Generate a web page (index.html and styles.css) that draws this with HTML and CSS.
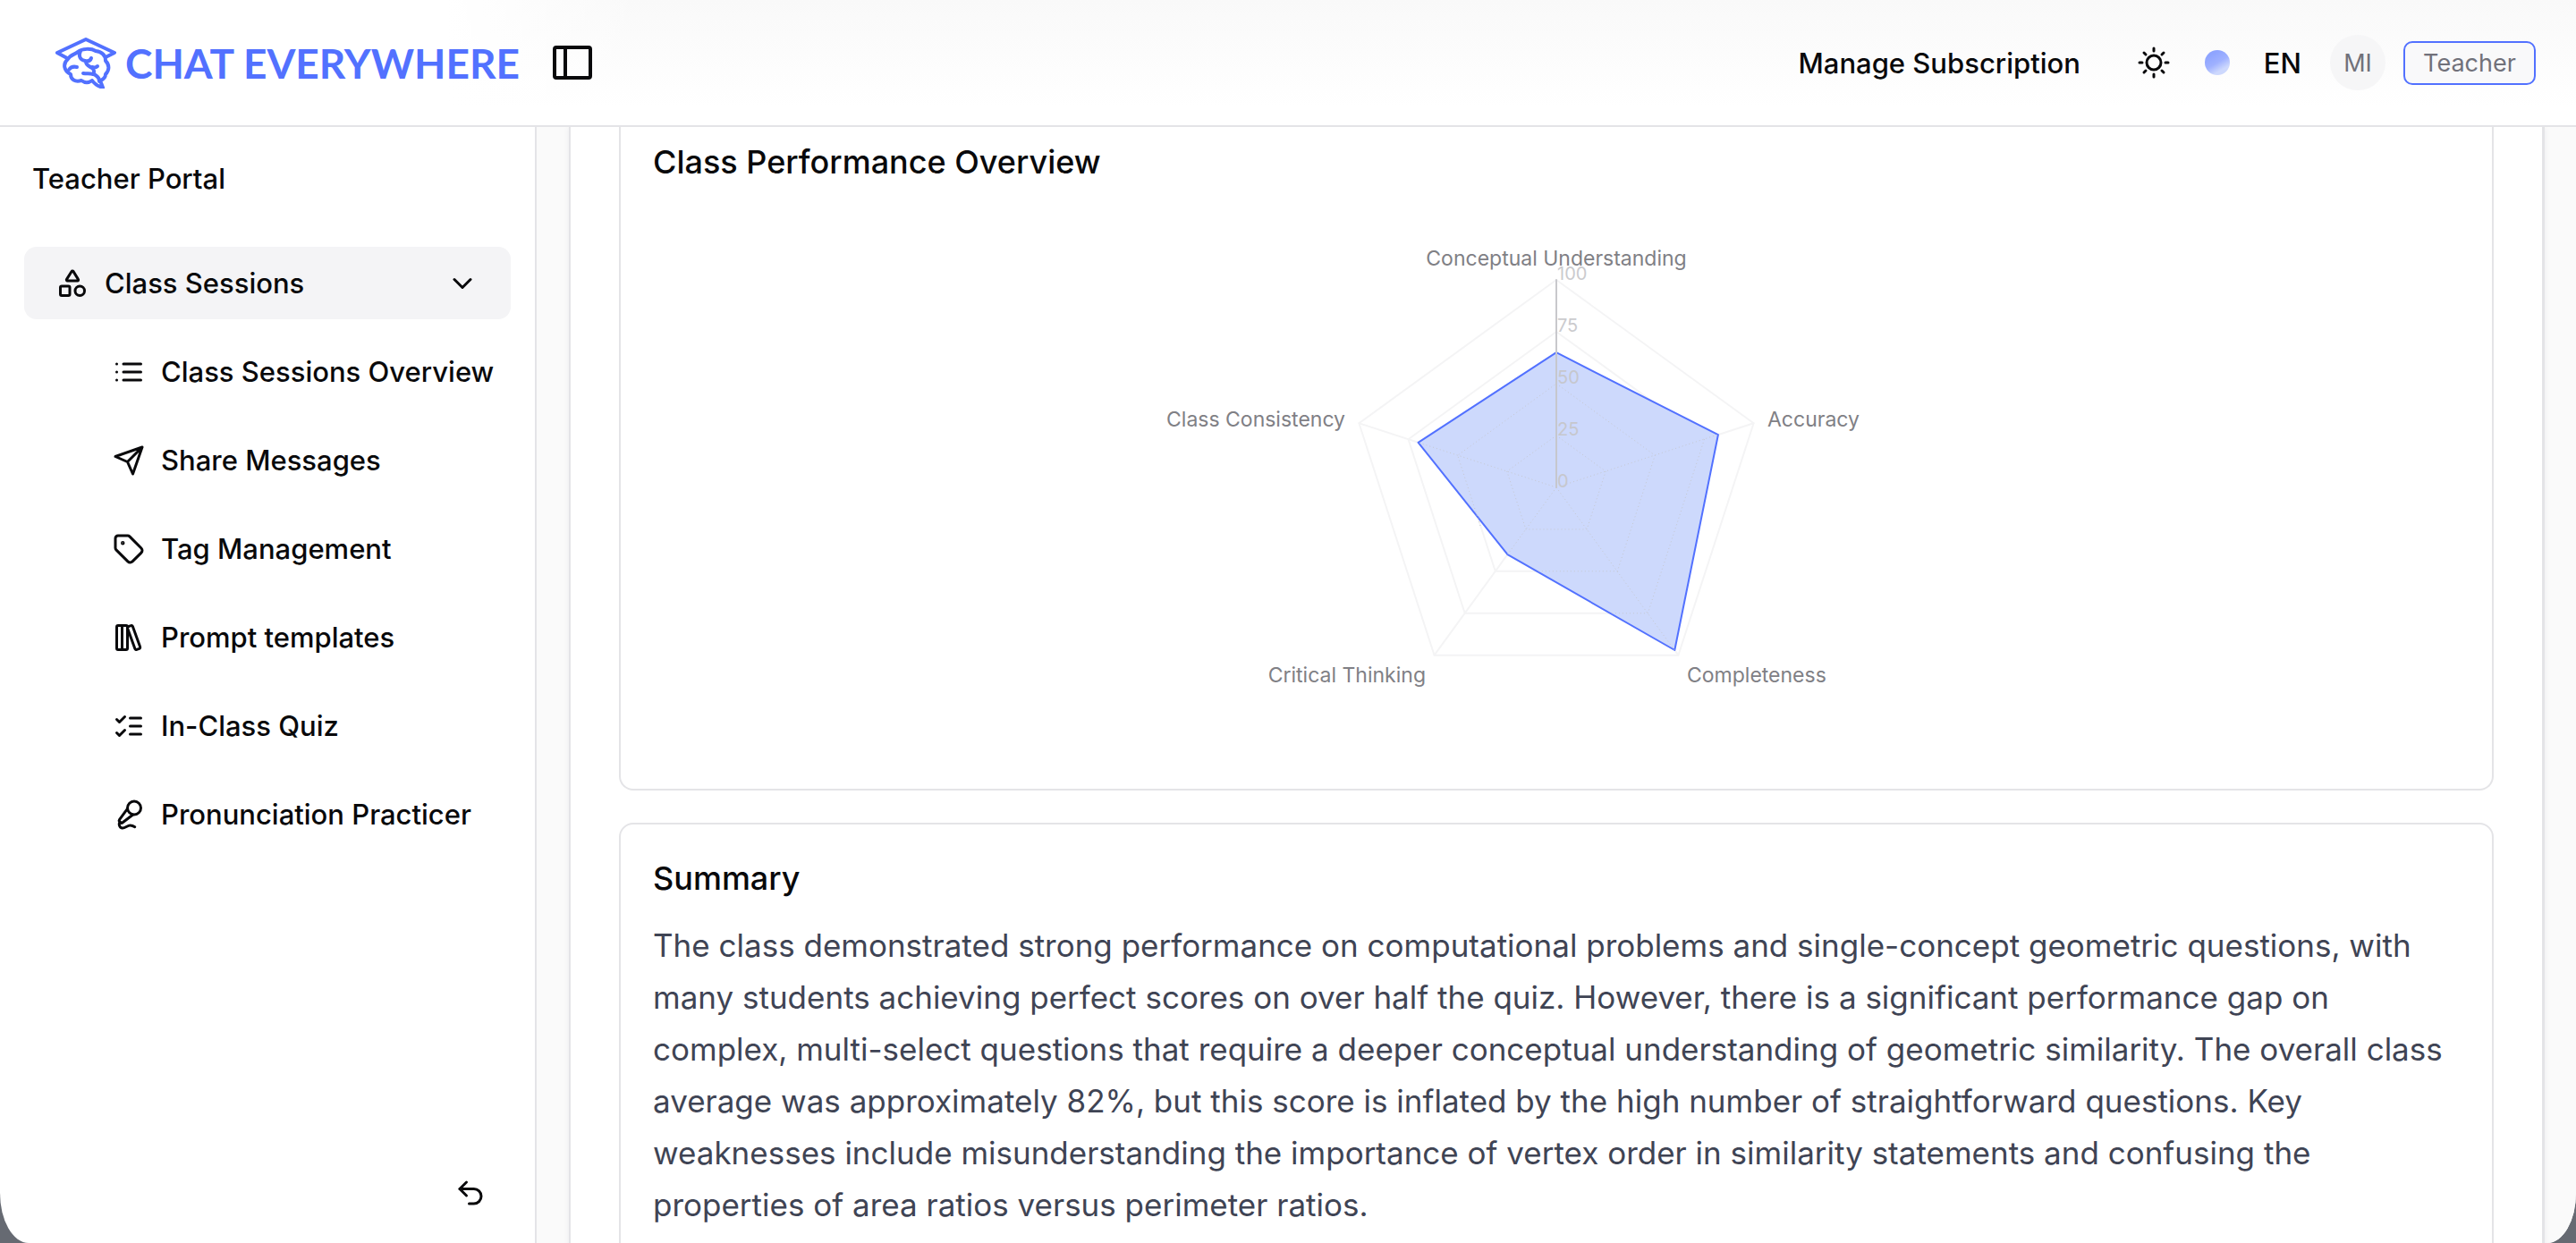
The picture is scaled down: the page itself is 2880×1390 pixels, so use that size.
FILE: index.html
```html
<!DOCTYPE html>
<html lang="en">
<head>
  <meta charset="utf-8">
  <title>Chat Everywhere - Teacher Portal</title>
  <link rel="stylesheet" href="styles.css">
</head>
<body>
  <div class="app">
    <header class="topbar">
      <a class="logo" href="#">
        <svg class="logo-mark" viewBox="0 0 68 58">
          <path d="M13 24 2 18 34 3 66 18 56 23" />
          <path d="M14 25C17 20 22 20 25 17C30 13 40 13 45 16C52 17 56 21 56 27C61 32 60 38 56 42C56 46 53 48 50 49L53 57C46 55 43 52 41 49C37 52 33 52 29 49C22 51 17 48 17 42C9 38 8 30 14 25Z" />
          <path d="M28 16C25 22 28 26 33 27C37 28 39 27 40 24M34 28C34 33 39 33 42 36C44 39 43 42 41 42M41 34C44 35 46 34 47 33M31 41C36 42 42 40 46 44C49 46 49 48 49 50M15 37C17 34 20 33 24 34" />
        </svg>
        <span>CHAT EVERYWHERE</span>
      </a>
      <button class="icon-btn panel-toggle" aria-label="Toggle sidebar">
        <svg viewBox="0 0 44 40"><rect x="2" y="3" width="40" height="34" rx="2" /><path d="M14 3v34" /></svg>
      </button>
      <nav class="topbar-actions">
        <a class="manage" href="#">Manage Subscription</a>
        <button class="icon-btn sun" aria-label="Light mode">
          <svg viewBox="0 0 36 36"><circle cx="18" cy="18" r="8" /><path d="M18 2v3M18 31v3M2 18h3M31 18h3M7 7l2 2M27 27l2 2M29 7l-2 2M9 27l-2 2" /></svg>
        </button>
        <button class="theme-dot" aria-label="Theme color"></button>
        <button class="lang">EN</button>
        <span class="avatar">MI</span>
        <button class="role">Teacher</button>
      </nav>
    </header>

    <div class="body">
      <aside class="sidebar">
        <div class="sidebar-title">Teacher Portal</div>
        <button class="nav-group">
          <svg class="icon" viewBox="0 0 24 24"><path d="M8.3 10a.7.7 0 0 1-.626-1.079L11.4 3a.7.7 0 0 1 1.198-.043L16.3 8.9a.7.7 0 0 1-.572 1.1Z" /><rect x="3" y="14" width="7" height="7" rx="1" /><circle cx="17.5" cy="17.5" r="3.5" /></svg>
          <span>Class Sessions</span>
          <svg class="icon chevron" viewBox="0 0 24 24"><path d="m6 9 6 6 6-6" /></svg>
        </button>
        <nav class="nav-list">
          <a class="nav-item" href="#">
            <svg class="icon" viewBox="0 0 24 24"><path d="M3 6h.01M3 12h.01M3 18h.01M8 6h13M8 12h13M8 18h13" /></svg>
            <span>Class Sessions Overview</span>
          </a>
          <a class="nav-item" href="#">
            <svg class="icon" viewBox="0 0 24 24"><path d="m22 2-7 20-4-9-9-4ZM22 2 11 13" /></svg>
            <span>Share Messages</span>
          </a>
          <a class="nav-item" href="#">
            <svg class="icon" viewBox="0 0 24 24"><path d="M12.586 2.586A2 2 0 0 0 11.172 2H4a2 2 0 0 0-2 2v7.172a2 2 0 0 0 .586 1.414l8.704 8.704a2.426 2.426 0 0 0 3.42 0l6.58-6.58a2.426 2.426 0 0 0 0-3.42z" /><circle cx="7.5" cy="7.5" r=".5" fill="currentColor" /></svg>
            <span>Tag Management</span>
          </a>
          <a class="nav-item" href="#">
            <svg class="icon" viewBox="0 0 24 24"><rect x="3" y="3" width="8" height="18" rx="1" /><path d="M7 3v18M20.4 18.9c.2.5-.1 1.1-.6 1.3l-1.9.7c-.5.2-1.1-.1-1.3-.6L11.1 5.1c-.2-.5.1-1.1.6-1.3l1.9-.7c.5-.2 1.1.1 1.3.6Z" /></svg>
            <span>Prompt templates</span>
          </a>
          <a class="nav-item" href="#">
            <svg class="icon" viewBox="0 0 24 24"><path d="m3 17 2 2 4-4M3 7l2 2 4-4M13 6h8M13 12h8M13 18h8" /></svg>
            <span>In-Class Quiz</span>
          </a>
          <a class="nav-item" href="#">
            <svg class="icon" viewBox="0 0 24 24"><path d="m11 7.601-5.994 8.19a1 1 0 0 0 .1 1.298l.817.818a1 1 0 0 0 1.314.087L15.09 12" /><path d="M16.5 21.174C15.5 20.5 14.372 20 13 20c-2.058 0-3.928 2.356-6 2-2.072-.356-2.775-3.369-1.5-4.5" /><circle cx="16" cy="7" r="5" /></svg>
            <span>Pronunciation Practicer</span>
          </a>
        </nav>
        <button class="icon-btn back" aria-label="Back">
          <svg class="icon" viewBox="0 0 24 24"><path d="M9 14 4 9l5-5" /><path d="M4 9h10.5a5.5 5.5 0 0 1 0 11H11" /></svg>
        </button>
      </aside>

      <main class="content">
        <div class="panel">
          <section class="card chart-card">
            <h2>Class Performance Overview</h2>
            <svg class="radar" viewBox="0 0 900 540">
              <!-- center 450,305, radius 232 -->
              <g class="grid">
                <path d="M450 247 505.2 287.1 484.1 351.9H415.9L394.8 287.1Z" />
                <path d="M450 189 560.3 269.2 518.2 398.8H381.8L339.7 269.2Z" />
                <path d="M450 131 615.5 251.2 552.3 445.8H347.7L284.5 251.2Z" />
                <path d="M450 73 670.6 233.3 586.4 492.7H313.6L229.4 233.3Z" />
                <path d="M450 305 670.6 233.3M450 305 586.4 492.7M450 305 313.6 492.7M450 305 229.4 233.3" />
              </g>
              <path class="area" d="M450 154.2 630.9 246.2 582.3 487 395.5 380.1 295.6 254.8Z" />
              <g class="grid-dots">
                <path d="M450 247 505.2 287.1 484.1 351.9H415.9L394.8 287.1Z" />
                <path d="M450 189 560.3 269.2 518.2 398.8H430M365 348 339.7 269.2 450 189" />
                <path d="M615.5 251.2 552.3 445.8H512" />
                <path d="M450 305 630 246.2M450 305 582 487M450 305 395.5 380M450 305 295.6 254.8" />
              </g>
              <path class="axis" d="M450 73V154" />
              <path class="axis inside" d="M450 154V305" />
              <g class="ticks">
                <text x="451" y="73">100</text>
                <text x="451" y="131">75</text>
                <text class="inside" x="451" y="189">50</text>
                <text class="inside" x="451" y="247">25</text>
                <text class="inside" x="451" y="305">0</text>
              </g>
              <g class="labels">
                <text x="450" y="57" text-anchor="middle">Conceptual Understanding</text>
                <text x="686" y="237">Accuracy</text>
                <text x="596" y="523">Completeness</text>
                <text x="304" y="523" text-anchor="end">Critical Thinking</text>
                <text x="214" y="237" text-anchor="end">Class Consistency</text>
              </g>
            </svg>
          </section>

          <section class="card">
            <h2>Summary</h2>
            <p>The class demonstrated strong performance on computational problems and single-concept geometric questions, with many students achieving perfect scores on over half the quiz. However, there is a significant performance gap on complex, multi-select questions that require a deeper conceptual understanding of geometric similarity. The overall class average was approximately 82%, but this score is inflated by the high number of straightforward questions. Key weaknesses include misunderstanding the importance of vertex order in similarity statements and confusing the properties of area ratios versus perimeter ratios.</p>
          </section>
        </div>
      </main>
    </div>
  </div>
</body>
</html>
```
FILE: styles.css
```css
* {
  box-sizing: border-box;
}

body {
  margin: 0;
  background: #666a72;
  color: #09090b;
  font-family: Inter, "Liberation Sans", sans-serif;
  font-size: 31px;
}

a {
  color: inherit;
  text-decoration: none;
}

button {
  padding: 0;
  border: none;
  background: none;
  color: inherit;
  font: inherit;
  cursor: pointer;
}

svg {
  display: block;
  fill: none;
  stroke: currentColor;
  stroke-linecap: round;
  stroke-linejoin: round;
}

.app {
  display: flex;
  flex-direction: column;
  height: 100vh;
  overflow: hidden;
  background: #fff;
  border-radius: 0 0 32px 32px / 0 0 56px 56px;
}

/* top bar */
.topbar {
  display: flex;
  align-items: center;
  flex-shrink: 0;
  height: 142px;
  padding: 0 45px 0 62px;
  border-bottom: 2px solid #e4e4e7;
  background: linear-gradient(90deg, #fff 500px, transparent 720px), linear-gradient(#f9f9f9, #fff 120px);
}

.logo {
  display: flex;
  align-items: center;
  gap: 10px;
  width: 520px;
  color: #5271ff;
  font-family: Lato, sans-serif;
  font-size: 46px;
  font-weight: 700;
  white-space: nowrap;
}

.logo-mark {
  flex-shrink: 0;
  width: 68px;
  height: 58px;
  stroke-width: 4;
}

.panel-toggle {
  margin-left: 36px;
}

.panel-toggle svg {
  width: 44px;
  height: 40px;
  stroke-width: 4;
}

.topbar-actions {
  display: flex;
  align-items: center;
  margin-left: auto;
  font-weight: 500;
}

.manage {
  margin-right: 64px;
}

.sun svg {
  width: 36px;
  height: 36px;
  stroke-width: 3;
}

.theme-dot {
  width: 28px;
  height: 28px;
  margin: 0 38px 0 39px;
  border-radius: 50%;
  background: linear-gradient(150deg, #8ea4ff 20%, #9fb1ff 50%, #cdd8fd 75%);
}

.avatar {
  display: flex;
  align-items: center;
  justify-content: center;
  width: 62px;
  height: 62px;
  margin: 0 20px 0 32px;
  border-radius: 50%;
  background: #f6f6f7;
  color: #71717a;
  font-size: 27px;
  font-weight: 400;
}

.role {
  width: 148px;
  height: 49px;
  border: 2px solid #5271ff;
  border-radius: 10px;
  background: #f9f9fa;
  color: #71717a;
  font-size: 27px;
  font-weight: 400;
}

/* sidebar */
.body {
  display: flex;
  flex: 1;
  min-height: 0;
}

.sidebar {
  display: flex;
  flex-direction: column;
  flex-shrink: 0;
  width: 600px;
  padding: 38px 27px 38px;
  border-right: 2px solid #e4e4e7;
  font-weight: 500;
}

.sidebar-title {
  padding-left: 9px;
  line-height: 40px;
}

.icon {
  flex-shrink: 0;
  width: 36px;
  height: 36px;
  stroke-width: 2;
}

.nav-group {
  display: flex;
  align-items: center;
  gap: 18px;
  height: 81px;
  margin-top: 56px;
  padding: 0 36px;
  border-radius: 14px;
  background: #f4f4f6;
}

.chevron {
  margin-left: auto;
}

.nav-list {
  display: flex;
  flex-direction: column;
  gap: 18px;
  margin-top: 18px;
}

.nav-item {
  display: flex;
  align-items: center;
  gap: 18px;
  height: 81px;
  padding-left: 99px;
  white-space: nowrap;
}

.back {
  align-self: flex-end;
  margin-top: auto;
  margin-right: 27px;
}

/* main content */
.content {
  flex: 1;
  min-width: 0;
  overflow: hidden;
  padding: 0 35px 0 36px;
  background: #fafafa;
}

.panel {
  min-height: 100%;
  padding: 0 54px;
  border: solid #e4e4e7;
  border-width: 0 3px 0 2px;
  background: #fff;
  box-shadow: 0 0 6px #ececef;
}

.card {
  margin-bottom: 36px;
  padding: 36px;
  border: 2px solid #e4e4e7;
  border-radius: 16px;
}

.chart-card {
  padding-top: 15px;
  padding-bottom: 102px;
  border-top: none;
  border-radius: 0 0 16px 16px;
}

h2 {
  margin: 0;
  font-size: 36px;
  line-height: 48px;
  font-weight: 500;
}

.card p {
  margin: 22px 0 36px;
  color: #3f4454;
  font-size: 35px;
  line-height: 58px;
}

/* radar chart */
.radar {
  width: 900px;
  height: 540px;
  margin: 35px auto 0;
  stroke-width: 2;
}

.grid {
  stroke: #f4f4f5;
}

.grid-dots {
  stroke: #c6c8d0;
  stroke-width: 1;
  stroke-linecap: butt;
  stroke-dasharray: 1 3;
}

.area {
  fill: #cdd9fc;
  stroke: #5271ff;
}

.axis {
  stroke: #c8c8cc;
}

.axis.inside {
  stroke: #c6c7cd;
}

.radar text {
  stroke: none;
}

.labels {
  fill: #808085;
  font-size: 23px;
}

.ticks {
  fill: #cbcbce;
  font-size: 20px;
}

.ticks .inside {
  fill: #c6c7cd;
}
```
